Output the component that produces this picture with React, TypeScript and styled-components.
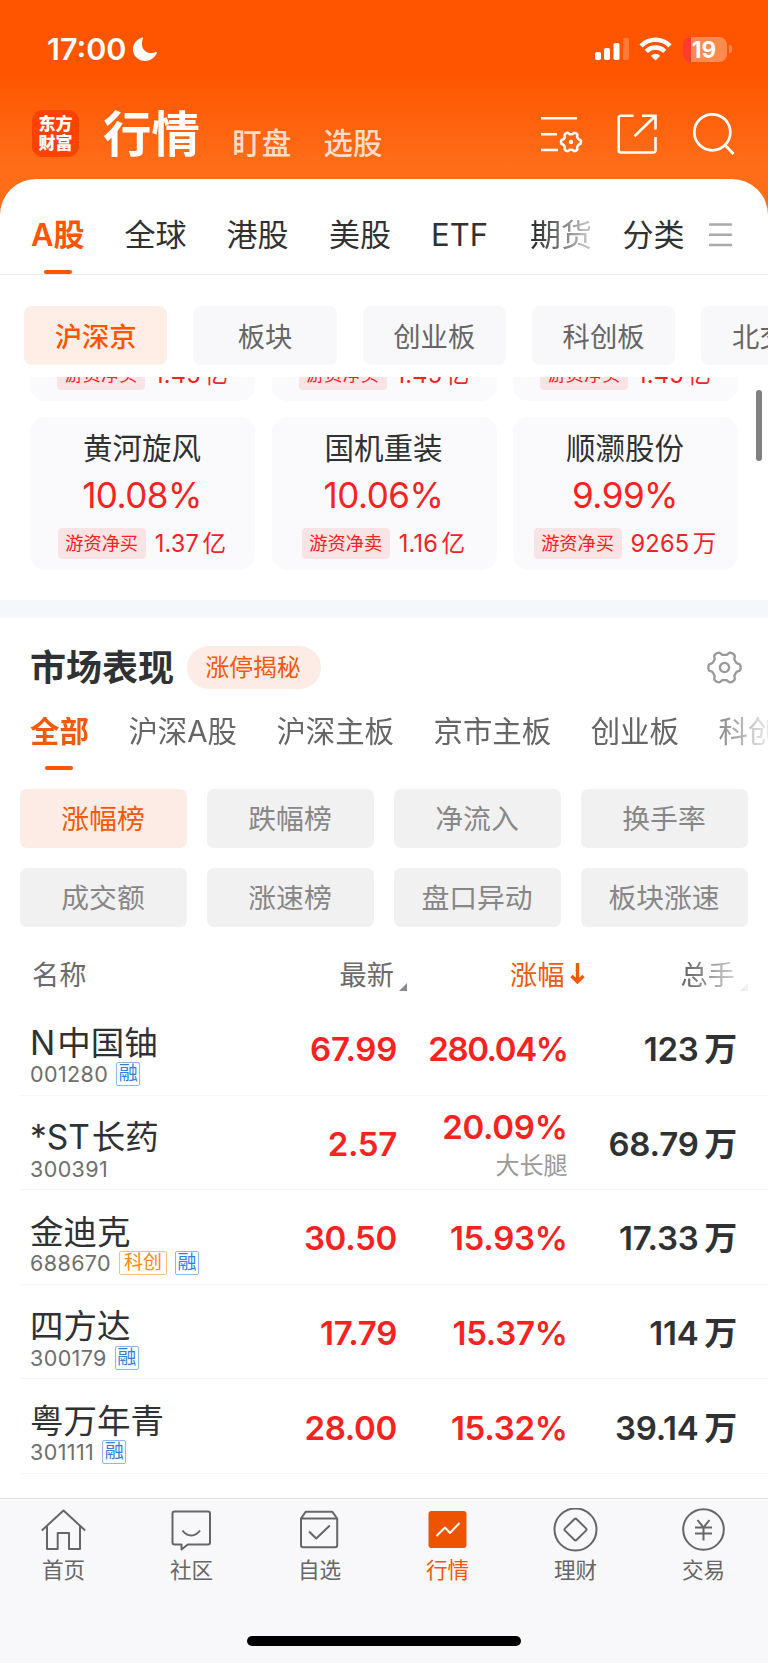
import React from 'react';
import styled, { createGlobalStyle, css } from 'styled-components';

const ORANGE = '#ff5500';
const RED = '#f9221f';

const GlobalStyle = createGlobalStyle`
  *, *::before, *::after { box-sizing: border-box; }
  body {
    margin: 0;
    background: #fff;
    font-family: Inter, "Noto Sans CJK SC", sans-serif;
    color: #303133;
    -webkit-font-smoothing: antialiased;
  }
  svg { display: block; flex: none; }
`;

const Page = styled.div`
  width: 768px;
  height: 1663px;
  display: flex;
  flex-direction: column;
  overflow: hidden;
  background: #fff;
  white-space: nowrap;
`;

/* ---------- header ---------- */

const Header = styled.header`
  flex: none;
  height: 216px;
  margin-bottom: -37px;
  background: linear-gradient(#ff5500 0, #ff5500 75px, #ff6d18 165px, #ff6d18 100%);
  color: #fff;
`;

const StatusBar = styled.div`
  height: 98px;
  padding: 0 36px 0 47px;
  display: flex;
  align-items: center;
`;

const Clock = styled.span`
  width: 86px;
  font-size: 30.500px;
  line-height: 36px;
  font-weight: 600;
`;

const StatusIcons = styled.div`
  margin-left: auto;
  display: flex;
  align-items: center;
`;

const Battery = styled.div`
  width: 44px;
  height: 25px;
  margin-left: 11px;
  border-radius: 8px;
  background: linear-gradient(90deg, #ff3b30 8px, #ff8a50 8px);
  font-size: 22.500px;
  line-height: 26px;
  font-weight: 700;
  text-align: center;
  text-indent: -2px;
`;

const BatteryTip = styled.div`
  width: 3px;
  height: 8px;
  margin-left: 2px;
  border-radius: 0 3px 3px 0;
  background: #ff8a50;
`;

const NavBar = styled.div`
  height: 82px;
  padding: 0 33px 0 32px;
  display: flex;
  align-items: flex-start;
`;

const Logo = styled.div`
  width: 47px;
  height: 47px;
  margin-top: 12px;
  padding-top: 5px;
  border-radius: 11px;
  background: #ff4200;
  font-size: 17px;
  line-height: 19px;
  font-weight: 900;
  text-align: center;
`;

const NavTitle = styled.h1`
  margin: 1px 0 0 24px;
  font-size: 48.4px;
  line-height: 72px;
  font-weight: 700;
`;

const NavLink = styled.span`
  margin: 24px 0 0 32.500px;
  font-size: 29.4px;
  line-height: 44px;
  font-weight: 500;
  color: rgba(255, 255, 255, 0.8);
`;

const NavIcons = styled.div`
  margin: 15px 0 0 auto;
  display: flex;
  gap: 34px;
`;

/* ---------- sheet and tabs ---------- */

const Sheet = styled.main`
  flex: 1;
  min-height: 0;
  display: flex;
  flex-direction: column;
  border-radius: 36px 36px 0 0;
  background: #fff;
  overflow: hidden;
`;

const MarketTabs = styled.nav`
  flex: none;
  height: 96px;
  padding: 0 35px 0 31px;
  display: flex;
  align-items: stretch;
  border-bottom: 1px solid #ececee;
`;

const tabBase = css<{ $active?: boolean }>`
  display: flex;
  flex-direction: column;
  align-items: center;
  justify-content: space-between;
  &::after {
    content: '';
    width: 28px;
    height: 4px;
    border-radius: 2px;
    background: ${(p) => (p.$active ? ORANGE : 'transparent')};
  }
`;

const MarketTab = styled.span<{ $active?: boolean; $fade?: boolean; $gap?: number }>`
  ${tabBase}
  padding-top: 34px;
  margin-right: ${(p) => p.$gap ?? 40}px;
  font-size: 31px;
  line-height: 44px;
  font-weight: ${(p) => (p.$active ? 600 : 400)};
  color: ${(p) => (p.$active ? ORANGE : '#303133')};
  ${(p) =>
    p.$fade &&
    css`
      mask-image: linear-gradient(90deg, #000 10%, rgba(0, 0, 0, 0.3) 90%);
    `}
`;

const MenuIcon = styled.div`
  margin: 44px 0 0 auto;
`;

const ChipRow = styled.div`
  flex: none;
  height: 102px;
  padding: 31px 0 12px 24px;
  display: flex;
  gap: 26px;
  overflow: hidden;
`;

const Chip = styled.span<{ $active?: boolean }>`
  flex: none;
  width: 143.3px;
  height: 59px;
  padding-top: 2px;
  border-radius: 8px;
  background: ${(p) => (p.$active ? '#ffeee6' : '#f8f8fb')};
  color: ${(p) => (p.$active ? ORANGE : '#666')};
  font-size: 27.3px;
  line-height: 59px;
  font-weight: ${(p) => (p.$active ? 500 : 400)};
  text-align: center;
`;

/* ---------- stock cards ---------- */

const CardViewport = styled.section`
  position: relative;
  flex: none;
  height: 223px;
  padding: 0 30px 30px;
  display: flex;
  flex-direction: column;
  gap: 16px;
`;

const CardGrid = styled.div`
  display: grid;
  grid-template-columns: repeat(3, 225px);
  justify-content: space-between;
`;

const Card = styled.article`
  height: 153px;
  padding: 10px 1px 0 0;
  display: flex;
  flex-direction: column;
  align-items: center;
  border-radius: 15px;
  background: #fafafc;
`;

/* bottom edge of a card that is scrolled under the chip row */
const PeekCard = styled.article`
  height: 24px;
  padding-bottom: 11px;
  display: flex;
  flex-direction: column;
  align-items: center;
  justify-content: flex-end;
  border-radius: 0 0 15px 15px;
  background: #fafafc;
  overflow: hidden;
`;

const CardName = styled.span`
  font-size: 29.500px;
  line-height: 42px;
`;

const CardPercent = styled.span`
  margin-top: 5px;
  font-size: 35px;
  line-height: 42px;
  letter-spacing: -0.5px;
  color: ${RED};
`;

const CardFlow = styled.div`
  flex: none;
  margin-top: 12px;
  display: flex;
  align-items: center;
  gap: 9px;
  color: ${RED};
`;

const FlowTag = styled.span`
  width: 88px;
  height: 31px;
  border-radius: 4px;
  background: #f9e4e5;
  font-size: 18.2px;
  line-height: 31px;
  text-align: center;
`;

const FlowValue = styled.span`
  font-size: 23.6px;
  line-height: 31px;
  letter-spacing: 0.2px;
  word-spacing: -3.500px;
`;

const ScrollThumb = styled.div`
  position: absolute;
  top: 13px;
  right: 6px;
  width: 6px;
  height: 71px;
  border-radius: 3px;
  background: #808080;
`;

const Divider = styled.div`
  flex: none;
  height: 18px;
  background: #f6f7fa;
`;

/* ---------- market performance ---------- */

const SectionHead = styled.div`
  flex: none;
  height: 99px;
  padding: 0 26px 0 30px;
  display: flex;
  align-items: center;
`;

const SectionTitle = styled.h2`
  margin: 0;
  font-size: 36px;
  line-height: 52px;
  font-weight: 700;
`;

const Pill = styled.span`
  width: 134px;
  height: 43px;
  margin: 0 auto 0 13px;
  border-radius: 22px;
  background: #fdece5;
  color: #f25a0a;
  font-size: 23.8px;
  line-height: 43px;
  text-align: center;
  text-indent: -2px;
`;

const BoardTabs = styled.nav`
  flex: none;
  height: 53px;
  padding-left: 30px;
  display: flex;
  gap: 39.6px;
  overflow: hidden;
  mask-image: linear-gradient(90deg, #000 700px, transparent 780px);
`;

const BoardTab = styled.span<{ $active?: boolean }>`
  ${tabBase}
  flex: none;
  font-size: 29.4px;
  line-height: 29px;
  font-weight: ${(p) => (p.$active ? 700 : 400)};
  color: ${(p) => (p.$active ? '#f25a0a' : '#666')};
`;

const FilterGrid = styled.div`
  flex: none;
  padding: 19px 20px 0;
  display: grid;
  grid-template-columns: repeat(4, 1fr);
  grid-auto-rows: 59px;
  gap: 20px;
`;

const FilterButton = styled.span<{ $active?: boolean }>`
  padding: 1px 1px 0 0;
  border-radius: 7px;
  background: ${(p) => (p.$active ? '#fdece5' : '#f1f1f1')};
  color: ${(p) => (p.$active ? '#f25a0a' : '#878787')};
  font-size: 27.8px;
  line-height: 59px;
  text-align: center;
`;

/* ---------- table ---------- */

const columns = css`
  display: grid;
  grid-template-columns: 217px 150px 170.500px 169.500px;
`;

const TableHead = styled.div`
  ${columns}
  flex: none;
  height: 74px;
  padding: 29px 0 0 30px;
  font-size: 27.2px;
  line-height: 40px;
  color: #6b6b6b;
`;

const HeadCell = styled.span<{ $active?: boolean; $fade?: boolean; $shift?: number }>`
  display: flex;
  align-items: center;
  justify-content: flex-end;
  height: 40px;
  gap: 5px;
  margin-right: ${(p) => -(p.$shift ?? 0)}px;
  color: ${(p) => (p.$active ? '#f25a0a' : 'inherit')};
  ${(p) =>
    p.$fade &&
    css`
      mask-image: linear-gradient(90deg, #000 calc(100% - 60px), rgba(0, 0, 0, 0.1) 100%);
    `}
`;

const HeadName = styled.span`
  padding-left: 2px;
`;

const SortCorner = styled.i`
  align-self: flex-end;
  width: 8px;
  height: 8px;
  margin-bottom: 5px;
  background: #8a8a94;
  clip-path: polygon(100% 0, 100% 100%, 0 100%);
`;

const Row = styled.div`
  flex: none;
  height: 94.6px;
  margin-left: 20px;
  padding-left: 10px;
  ${columns}
  border-bottom: 1.500px solid #f5f5f6;
`;

const NameCell = styled.div`
  display: flex;
  flex-direction: column;
  padding-top: 18.500px;
`;

const StockName = styled.span`
  font-size: 33.500px;
  line-height: 46px;
  word-spacing: -7.500px;
`;

const CodeLine = styled.span`
  display: flex;
  align-items: center;
  height: 25px;
  margin-top: -4px;
  font-size: 21.500px;
  letter-spacing: 0.4px;
  color: #6e6e6e;
`;

const Badge = styled.i<{ $tone: string; $edge: string; $wide?: boolean }>`
  height: 24px;
  margin-left: 8px;
  padding: 0 ${(p) => (p.$wide ? 4 : 1.5)}px;
  border: 1px solid ${(p) => p.$edge};
  border-radius: 2px;
  color: ${(p) => p.$tone};
  font-style: normal;
  font-size: 19px;
  line-height: 22px;
  letter-spacing: 0;
`;

const NumberCell = styled.div<{ $red?: boolean; $tight?: boolean }>`
  display: flex;
  flex-direction: column;
  align-items: flex-end;
  justify-content: center;
  padding-top: 3px;
  font-size: 33px;
  line-height: 40px;
  font-weight: 600;
  letter-spacing: ${(p) => (p.$tight ? -1.4 : p.$red ? -0.3 : -0.2)}px;
  word-spacing: -2.500px;
  color: ${(p) => (p.$red ? RED : '#303133')};
`;

const Note = styled.small`
  margin-bottom: -2px;
  padding-top: 2px;
  font-size: 24px;
  line-height: 34px;
  font-weight: 400;
  letter-spacing: 0;
  color: #999;
`;

/* ---------- bottom bar ---------- */

const TabBar = styled.footer`
  flex: none;
  height: 165px;
  border-top: 1px solid #e2e2e6;
  background: #f8f8fb;
  display: flex;
  flex-direction: column;
  align-items: center;
`;

const TabItems = styled.div`
  width: 100%;
  height: 137px;
  display: grid;
  grid-template-columns: repeat(6, 1fr);
`;

const TabItem = styled.div<{ $active?: boolean }>`
  display: flex;
  flex-direction: column;
  align-items: center;
  padding: 9px 1px 0 0;
  font-size: 21.6px;
  line-height: 32px;
  color: ${(p) => (p.$active ? ORANGE : '#666')};
`;

const HomeIndicator = styled.div`
  width: 274px;
  height: 10px;
  border-radius: 5px;
  background: #000;
`;

/* ---------- icons ---------- */

/* six-lobed gear outline, radius 13 to 17 around the origin */
const GEAR =
  'M' +
  Array.from({ length: 120 }, (_, i) => {
    const a = (i * Math.PI) / 60;
    const r = 14.8 + 1.9 * Math.tanh(2 * Math.cos(6 * a));
    return `${(r * Math.cos(a)).toFixed(2)} ${(r * Math.sin(a)).toFixed(2)}`;
  }).join('L') +
  'Z';

const Moon = () => (
  <svg width="24" height="24" viewBox="0 0 24 24" fill="#fff">
    <path d="M9.2.4C4 1.900 0 6.600 0 12.200 0 18.800 5.300 24 12 24c5.300 0 9.900-3.300 11.800-8 .3-.8-.3-1.200-1-.9C14.500 18.300 6 12.300 9.900 1.500c.3-.8 0-1.300-.7-1.100Z" />
  </svg>
);

const Signal = () => (
  <svg width="34" height="24" viewBox="0 0 34 24" fill="#fff">
    <rect x="0" y="15" width="6" height="8" rx="1.800" />
    <rect x="9" y="11" width="6" height="12" rx="1.800" />
    <rect x="18.500" y="6" width="6" height="17" rx="1.800" />
    <rect x="28" y="1" width="6" height="22" rx="1.800" opacity=".22" />
  </svg>
);

const WifiSvg = styled.svg`
  margin-left: 10px;
`;

const Wifi = () => (
  <WifiSvg width="33" height="24" viewBox="0 0 33 24" fill="none" stroke="#fff" strokeWidth="4.600">
    <path d="M2 8.800C10.200.8 22.800.8 31 8.800" />
    <path d="M7.300 14.300C12.400 9.300 20.600 9.300 25.700 14.300" />
    <path d="M11.800 18.700q4.700-4 9.400 0L16.500 23.500Z" fill="#fff" stroke="none" />
  </WifiSvg>
);

const ListGear = () => (
  <svg width="42" height="42" viewBox="0 0 42 42" fill="none" stroke="#fff" strokeWidth="2.600">
    <path d="M0 5.300h36M0 21.300h16M0 37h17" />
    <path d={GEAR} transform="translate(30 29) scale(.6)" strokeWidth="4.200" />
    <circle cx="30" cy="29" r="2.200" fill="#fff" stroke="none" />
  </svg>
);

const Share = () => (
  <svg width="42" height="42" viewBox="0 0 42 42" fill="none" stroke="#fff" strokeWidth="2.600">
    <path d="M16.500 2.800H4Q1.700 2.800 1.700 5V37.500Q1.700 39.500 4 39.500H36Q38.500 39.500 38.500 37V24" />
    <path d="M25 2.800H38.500V16.500M38 3.300 17.500 23.300" />
  </svg>
);

const Search = () => (
  <svg width="42" height="42" viewBox="0 0 42 42" fill="none" stroke="#fff" strokeWidth="2.700">
    <circle cx="19.300" cy="19.300" r="18" />
    <path d="M32 32 40.500 41" />
  </svg>
);

const Gear = () => (
  <svg width="35" height="35" viewBox="-17.500 -17.500 35 35" fill="none" stroke="#999" strokeWidth="2.400">
    <path d={GEAR} transform="scale(.97)" />
    <circle r="4.600" />
  </svg>
);

const DownArrow = () => (
  <svg width="15" height="26" viewBox="0 0 15 26" fill="none" stroke="#f25a0a" strokeWidth="3.400">
    <path d="M7.500 0V18.500M1.500 13 7.500 18.800 13.500 13" />
  </svg>
);

const tabIcons: Record<string, React.ReactNode> = {
  首页: <path d="M.8 21.500 22.500 1.500 44.200 21.500M6 17.500V40H16.700V24H28V40H39V17.500" />,
  社区: (
    <path d="M5.500 2.500H39Q41 2.500 41 4.500V33.500Q41 35.500 39 35.500H18.800L12.500 40.500V35.500H5.500Q3.500 35.500 3.500 33.500V4.500Q3.500 2.500 5.500 2.500ZM13.500 21.500C18 28 26.500 28 31 21.500" />
  ),
  自选: (
    <path d="M4 9.500 8.800 2.700H35.200L40.200 9.500V36Q40.200 38.200 38 38.200H6.200Q4 38.200 4 36ZM4 9.500H40.200M12 22.500 19.200 29.500 32.800 16.500" />
  ),
  行情: (
    <>
      <rect x="3.500" y="2" width="38" height="37" rx="3" fill="#ee5400" stroke="none" />
      <path d="M11.500 27 20 18.500 25 24 34.500 14" stroke="#fff" />
    </>
  ),
  理财: (
    <>
      <circle cx="22.500" cy="20.500" r="21" />
      <path d="M21.300 10.200Q22.500 9 23.700 10.200L33 19.400Q34 20.500 33 21.600L23.700 30.800Q22.500 32 21.300 30.800L12 21.600Q11 20.500 12 19.400Z" />
    </>
  ),
  交易: (
    <>
      <circle cx="22.500" cy="20.500" r="20.300" />
      <path d="M16.500 11 22.500 18.500 28.500 11M22.500 18V31.500M14 18.500H31M14 24.500H31" />
    </>
  ),
};

/* ---------- data ---------- */

const marketTabs = [
  { label: 'A股', active: true, gap: 40 },
  { label: '全球', gap: 40 },
  { label: '港股', gap: 40.5 },
  { label: '美股', gap: 40 },
  { label: 'ETF', gap: 42 },
  { label: '期货', gap: 30.5, fade: true },
  { label: '分类', gap: 0 },
];

const peekFlows = [
  { id: 'left', tag: '游资净买', value: '1.45 亿' },
  { id: 'middle', tag: '游资净买', value: '1.45 亿' },
  { id: 'right', tag: '游资净买', value: '1.45 亿' },
];

const cards = [
  { name: '黄河旋风', pct: '10.08%', tag: '游资净买', value: '1.37 亿' },
  { name: '国机重装', pct: '10.06%', tag: '游资净卖', value: '1.16 亿' },
  { name: '顺灏股份', pct: '9.99%', tag: '游资净买', value: '9265 万' },
];

const filters = ['涨幅榜', '跌幅榜', '净流入', '换手率', '成交额', '涨速榜', '盘口异动', '板块涨速'];

const stocks = [
  { name: 'N 中国铀', code: '001280', tags: ['融'], price: '67.99', pct: '280.04%', vol: '123 万' },
  { name: '*ST 长药', code: '300391', tags: [], price: '2.57', pct: '20.09%', note: '大长腿', vol: '68.79 万' },
  { name: '金迪克', code: '688670', tags: ['科创', '融'], price: '30.50', pct: '15.93%', vol: '17.33 万' },
  { name: '四方达', code: '300179', tags: ['融'], price: '17.79', pct: '15.37%', vol: '114 万' },
  { name: '粤万年青', code: '301111', tags: ['融'], price: '28.00', pct: '15.32%', vol: '39.14 万' },
];

export default function App() {
  return (
    <Page>
      <GlobalStyle />
      <Header>
        <StatusBar>
          <Clock>17:00</Clock>
          <Moon />
          <StatusIcons>
            <Signal />
            <Wifi />
            <Battery>19</Battery>
            <BatteryTip />
          </StatusIcons>
        </StatusBar>
        <NavBar>
          <Logo>
            东方
            <br />
            财富
          </Logo>
          <NavTitle>行情</NavTitle>
          <NavLink>盯盘</NavLink>
          <NavLink>选股</NavLink>
          <NavIcons>
            <ListGear />
            <Share />
            <Search />
          </NavIcons>
        </NavBar>
      </Header>

      <Sheet>
        <MarketTabs>
          {marketTabs.map((t) => (
            <MarketTab key={t.label} $active={t.active} $fade={t.fade} $gap={t.gap}>
              {t.label}
            </MarketTab>
          ))}
          <MenuIcon>
            <svg width="24" height="24" viewBox="0 0 24 24" stroke="#aaa" strokeWidth="2.600" strokeLinecap="round">
              <path d="M1 1.500h21M1 11.800h21M1 22h21" />
            </svg>
          </MenuIcon>
        </MarketTabs>

        <ChipRow>
          {['沪深京', '板块', '创业板', '科创板', '北交所'].map((c, i) => (
            <Chip key={c} $active={i === 0}>
              {c}
            </Chip>
          ))}
        </ChipRow>

        <CardViewport>
          <CardGrid>
            {peekFlows.map((f) => (
              <PeekCard key={f.id}>
                <CardFlow>
                  <FlowTag>{f.tag}</FlowTag>
                  <FlowValue>{f.value}</FlowValue>
                </CardFlow>
              </PeekCard>
            ))}
          </CardGrid>
          <CardGrid>
            {cards.map((c) => (
              <Card key={c.name}>
                <CardName>{c.name}</CardName>
                <CardPercent>{c.pct}</CardPercent>
                <CardFlow>
                  <FlowTag>{c.tag}</FlowTag>
                  <FlowValue>{c.value}</FlowValue>
                </CardFlow>
              </Card>
            ))}
          </CardGrid>
          <ScrollThumb />
        </CardViewport>

        <Divider />

        <SectionHead>
          <SectionTitle>市场表现</SectionTitle>
          <Pill>涨停揭秘</Pill>
          <Gear />
        </SectionHead>

        <BoardTabs>
          {['全部', '沪深A股', '沪深主板', '京市主板', '创业板', '科创板'].map((b, i) => (
            <BoardTab key={b} $active={i === 0}>
              {b}
            </BoardTab>
          ))}
        </BoardTabs>

        <FilterGrid>
          {filters.map((f, i) => (
            <FilterButton key={f} $active={i === 0}>
              {f}
            </FilterButton>
          ))}
        </FilterGrid>

        <TableHead>
          <HeadName>名称</HeadName>
          <HeadCell $shift={10}>
            最新
            <SortCorner />
          </HeadCell>
          <HeadCell $active $shift={17}>
            涨幅
            <DownArrow />
          </HeadCell>
          <HeadCell $fade $shift={11}>
            总手
            <SortCorner />
          </HeadCell>
        </TableHead>

        {stocks.map((s) => (
          <Row key={s.code}>
            <NameCell>
              <StockName>{s.name}</StockName>
              <CodeLine>
                {s.code}
                {s.tags.map((t) => (
                  <Badge
                    key={t}
                    $wide={t.length > 1}
                    $tone={t === '融' ? '#2f7fe0' : '#ff8c00'}
                    $edge={t === '融' ? '#8ab8f0' : '#ffbe73'}
                  >
                    {t}
                  </Badge>
                ))}
              </CodeLine>
            </NameCell>
            <NumberCell $red>{s.price}</NumberCell>
            <NumberCell $red $tight={s.pct.length > 6}>
              {s.pct}
              {s.note && <Note>{s.note}</Note>}
            </NumberCell>
            <NumberCell>{s.vol}</NumberCell>
          </Row>
        ))}
      </Sheet>

      <TabBar>
        <TabItems>
          {Object.entries(tabIcons).map(([label, icon]) => (
            <TabItem key={label} $active={label === '行情'}>
              <svg
                width="45"
                height="46"
                viewBox="0 -1 45 46"
                fill="none"
                stroke="#666"
                strokeWidth="2"
                strokeLinejoin="round"
              >
                {icon}
              </svg>
              {label}
            </TabItem>
          ))}
        </TabItems>
        <HomeIndicator />
      </TabBar>
    </Page>
  );
}
